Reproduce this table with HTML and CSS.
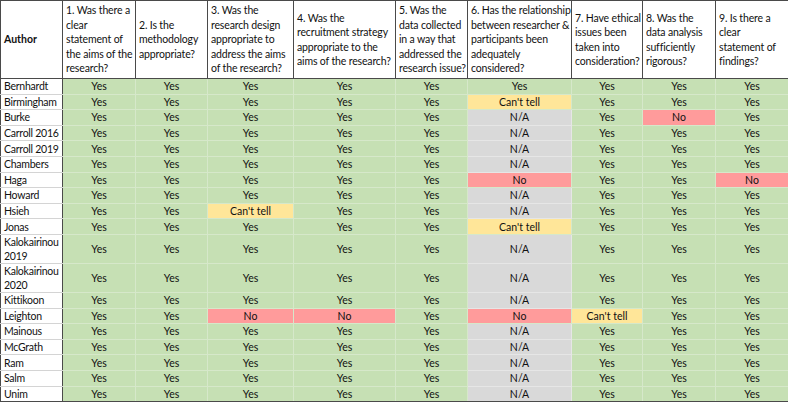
FILE: index.html
```html
<!DOCTYPE html>
<html>
<head>
<meta charset="utf-8">
<link rel="stylesheet" href="styles.css">
</head>
<body>
<table class="appraisal">
<colgroup>
<col class="c-author"><col class="c1"><col class="c2"><col class="c3"><col class="c4"><col class="c5"><col class="c6"><col class="c7"><col class="c8"><col class="c9">
</colgroup>
<thead>
<tr>
<th class="author-h">Author</th>
<th>1. Was there a<br>clear<br>statement of<br>the aims of the<br>research?</th>
<th>2. Is the<br>methodology<br>appropriate?</th>
<th>3. Was the<br>research design<br>appropriate to<br>address the aims<br>of the research?</th>
<th>4. Was the<br>recruitment strategy<br>appropriate to the<br>aims of the research?</th>
<th>5. Was the<br>data collected<br>in a way that<br>addressed the<br>research issue?</th>
<th>6. Has the relationship<br>between researcher &amp;<br>participants been<br>adequately<br>considered?</th>
<th>7. Have ethical<br>issues been<br>taken into<br>consideration?</th>
<th>8. Was the<br>data analysis<br>sufficiently<br>rigorous?</th>
<th>9. Is there a<br>clear<br>statement of<br>findings?</th>
</tr>
</thead>
<tbody>
<tr><td class="name">Bernhardt</td><td class="y">Yes</td><td class="y">Yes</td><td class="y">Yes</td><td class="y">Yes</td><td class="y">Yes</td><td class="y">Yes</td><td class="y">Yes</td><td class="y">Yes</td><td class="y">Yes</td></tr>
<tr><td class="name">Birmingham</td><td class="y">Yes</td><td class="y">Yes</td><td class="y">Yes</td><td class="y">Yes</td><td class="y">Yes</td><td class="ct">Can't tell</td><td class="y">Yes</td><td class="y">Yes</td><td class="y">Yes</td></tr>
<tr><td class="name">Burke</td><td class="y">Yes</td><td class="y">Yes</td><td class="y">Yes</td><td class="y">Yes</td><td class="y">Yes</td><td class="na">N/A</td><td class="y">Yes</td><td class="no">No</td><td class="y">Yes</td></tr>
<tr><td class="name">Carroll 2016</td><td class="y">Yes</td><td class="y">Yes</td><td class="y">Yes</td><td class="y">Yes</td><td class="y">Yes</td><td class="na">N/A</td><td class="y">Yes</td><td class="y">Yes</td><td class="y">Yes</td></tr>
<tr><td class="name">Carroll 2019</td><td class="y">Yes</td><td class="y">Yes</td><td class="y">Yes</td><td class="y">Yes</td><td class="y">Yes</td><td class="na">N/A</td><td class="y">Yes</td><td class="y">Yes</td><td class="y">Yes</td></tr>
<tr><td class="name">Chambers</td><td class="y">Yes</td><td class="y">Yes</td><td class="y">Yes</td><td class="y">Yes</td><td class="y">Yes</td><td class="na">N/A</td><td class="y">Yes</td><td class="y">Yes</td><td class="y">Yes</td></tr>
<tr><td class="name">Haga</td><td class="y">Yes</td><td class="y">Yes</td><td class="y">Yes</td><td class="y">Yes</td><td class="y">Yes</td><td class="no">No</td><td class="y">Yes</td><td class="y">Yes</td><td class="no">No</td></tr>
<tr><td class="name">Howard</td><td class="y">Yes</td><td class="y">Yes</td><td class="y">Yes</td><td class="y">Yes</td><td class="y">Yes</td><td class="na">N/A</td><td class="y">Yes</td><td class="y">Yes</td><td class="y">Yes</td></tr>
<tr><td class="name">Hsieh</td><td class="y">Yes</td><td class="y">Yes</td><td class="ct">Can't tell</td><td class="y">Yes</td><td class="y">Yes</td><td class="na">N/A</td><td class="y">Yes</td><td class="y">Yes</td><td class="y">Yes</td></tr>
<tr><td class="name">Jonas</td><td class="y">Yes</td><td class="y">Yes</td><td class="y">Yes</td><td class="y">Yes</td><td class="y">Yes</td><td class="ct">Can't tell</td><td class="y">Yes</td><td class="y">Yes</td><td class="y">Yes</td></tr>
<tr class="tall"><td class="name">Kalokairinou<br>2019</td><td class="y">Yes</td><td class="y">Yes</td><td class="y">Yes</td><td class="y">Yes</td><td class="y">Yes</td><td class="na">N/A</td><td class="y">Yes</td><td class="y">Yes</td><td class="y">Yes</td></tr>
<tr class="tall"><td class="name">Kalokairinou<br>2020</td><td class="y">Yes</td><td class="y">Yes</td><td class="y">Yes</td><td class="y">Yes</td><td class="y">Yes</td><td class="na">N/A</td><td class="y">Yes</td><td class="y">Yes</td><td class="y">Yes</td></tr>
<tr><td class="name">Kittikoon</td><td class="y">Yes</td><td class="y">Yes</td><td class="y">Yes</td><td class="y">Yes</td><td class="y">Yes</td><td class="na">N/A</td><td class="y">Yes</td><td class="y">Yes</td><td class="y">Yes</td></tr>
<tr><td class="name">Leighton</td><td class="y">Yes</td><td class="y">Yes</td><td class="no">No</td><td class="no">No</td><td class="y">Yes</td><td class="no">No</td><td class="ct">Can't tell</td><td class="y">Yes</td><td class="y">Yes</td></tr>
<tr><td class="name">Mainous</td><td class="y">Yes</td><td class="y">Yes</td><td class="y">Yes</td><td class="y">Yes</td><td class="y">Yes</td><td class="na">N/A</td><td class="y">Yes</td><td class="y">Yes</td><td class="y">Yes</td></tr>
<tr><td class="name">McGrath</td><td class="y">Yes</td><td class="y">Yes</td><td class="y">Yes</td><td class="y">Yes</td><td class="y">Yes</td><td class="na">N/A</td><td class="y">Yes</td><td class="y">Yes</td><td class="y">Yes</td></tr>
<tr><td class="name">Ram</td><td class="y">Yes</td><td class="y">Yes</td><td class="y">Yes</td><td class="y">Yes</td><td class="y">Yes</td><td class="na">N/A</td><td class="y">Yes</td><td class="y">Yes</td><td class="y">Yes</td></tr>
<tr><td class="name">Salm</td><td class="y">Yes</td><td class="y">Yes</td><td class="y">Yes</td><td class="y">Yes</td><td class="y">Yes</td><td class="na">N/A</td><td class="y">Yes</td><td class="y">Yes</td><td class="y">Yes</td></tr>
<tr><td class="name">Unim</td><td class="y">Yes</td><td class="y">Yes</td><td class="y">Yes</td><td class="y">Yes</td><td class="y">Yes</td><td class="na">N/A</td><td class="y">Yes</td><td class="y">Yes</td><td class="y">Yes</td></tr>
</tbody>
</table>
</body>
</html>
```
FILE: styles.css
```css
html, body {
  margin: 0;
  padding: 0;
  background: #ffffff;
}

.appraisal {
  border-collapse: collapse;
  table-layout: fixed;
  width: 788px;
  font-family: Lato, "Liberation Sans", sans-serif;
  font-size: 10.5px;
  color: #111111;
  border: 1px solid #4a4a4a;
}

.c-author { width: 62px; }
.c1 { width: 73px; }
.c2 { width: 72px; }
.c3 { width: 86px; }
.c4 { width: 102px; }
.c5 { width: 72px; }
.c6 { width: 104px; }
.c7 { width: 71px; }
.c8 { width: 73px; }
.c9 { width: 73px; }

.appraisal th {
  height: 77px;
  padding: 0 1px 0 3px;
  text-align: left;
  vertical-align: middle;
  font-weight: normal;
  line-height: 14.4px;
  letter-spacing: -0.15px;
  white-space: nowrap;
  overflow: hidden;
  border: 1px solid #4a4a4a;
  background: #ffffff;
}

.appraisal th.author-h {
  font-weight: bold;
  letter-spacing: 0;
}

.appraisal td {
  height: 14.6px;
  padding: 0 2px;
  line-height: 12px;
  text-align: center;
  vertical-align: middle;
  border: 1px solid #d6e8ca;
  white-space: nowrap;
  overflow: hidden;
}

.appraisal tr.tall td {
  height: 27px;
  line-height: 14px;
}

.appraisal td.name {
  text-align: left;
  padding-left: 3px;
  letter-spacing: -0.25px;
  background: #ffffff;
  border-left: 1px solid #4a4a4a;
  border-right: 1px solid #4a4a4a;
  border-top: 1px solid #d4d4d4;
  border-bottom: 1px solid #d4d4d4;
}

.appraisal td.y { background: #c6e0b4; }
.appraisal td.ct { background: #ffe699; }
.appraisal td.no { background: #ff9b9b; }
.appraisal td.na { background: #d9d9d9; border-color: #e6e6e6; }

.appraisal tbody tr:last-child td {
  border-bottom: 1px solid #4a4a4a;
}

.appraisal td:last-child {
  border-right: 1px solid #4a4a4a;
}
```
